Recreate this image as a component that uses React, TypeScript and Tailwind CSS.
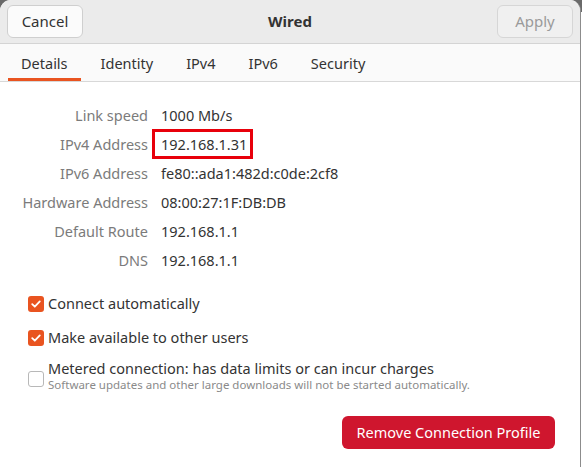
import React from "react"

const details: [string, string][] = [
  ["Link speed", "1000 Mb/s"],
  ["IPv4 Address", "192.168.1.31"],
  ["IPv6 Address", "fe80::ada1:482d:c0de:2cf8"],
  ["Hardware Address", "08:00:27:1F:DB:DB"],
  ["Default Route", "192.168.1.1"],
  ["DNS", "192.168.1.1"],
]

const tabs = ["Details", "Identity", "IPv4", "IPv6", "Security"]

function Check({ checked }: { checked: boolean }) {
  if (!checked) {
    return <span className="block w-[16px] h-[16px] rounded-[3px] border border-[#b8b8b8] bg-white" />
  }
  return (
    <span className="flex items-center justify-center w-[16px] h-[16px] rounded-[3px] bg-[#e95420]">
      <svg width="12" height="12" viewBox="0 0 12 12" fill="none">
        <path d="M2.2 6.2L4.8 8.7L9.8 3.4" stroke="white" strokeWidth="1.8" strokeLinecap="round" strokeLinejoin="round" />
      </svg>
    </span>
  )
}

export default function App() {
  return (
    <div className="relative w-[582px] h-[467px] bg-white overflow-hidden" style={{ fontFamily: '"Noto Sans", "DejaVu Sans", sans-serif' }}>
      {/* dark desktop peeking behind the rounded corners */}
      <div className="absolute left-0 top-0 w-[12px] h-[12px] bg-[#6a6a6a]" />
      <div className="absolute left-[568px] top-0 w-[14px] h-[12px] bg-[#6a6a6a]" />

      <div className="relative w-[581px] h-[467px] flex flex-col bg-white border-r border-[#8c8c8c] rounded-t-[11px] overflow-hidden">
        {/* Header bar */}
        <div className="h-[44px] shrink-0 flex items-center justify-between px-[7px] bg-[#ebebeb] border-b border-[#d4d4d4]">
          <button className="w-[76px] h-[33px] rounded-[6px] border border-[#cfcfcf] bg-[#fbfbfb] text-[15px] text-[#333]">
            Cancel
          </button>
          <span className="text-[15px] font-bold text-[#333]">Wired</span>
          <button className="w-[76px] h-[33px] rounded-[6px] border border-[#d6d6d6] bg-[#f0f0f0] text-[15px] text-[#9a9a9a]">
            Apply
          </button>
        </div>

        {/* Tabs */}
        <div className="h-[38px] shrink-0 flex items-stretch gap-[7px] pl-[8px] bg-[#fafafa] border-b border-[#d8d8d8]">
          {tabs.map((t, i) => (
            <div
              key={t}
              className={`flex items-center px-[13px] text-[14.5px] text-[#333] border-b-[3px] ${
                i === 0 ? "border-[#e95420]" : "border-transparent"
              }`}
            >
              <span className="pt-[5px]">{t}</span>
            </div>
          ))}
        </div>

        {/* Details grid */}
        <div className="grid grid-cols-[148px_1fr] gap-x-[13px] pt-[19px]">
          {details.map(([label, value]) => (
            <React.Fragment key={label}>
              <div className="h-[29px] flex items-center justify-end text-[14.5px] text-[#7b7b7b]">{label}</div>
              <div className="h-[29px] flex items-center text-[14.5px] text-[#333]">
                {label === "IPv4 Address" ? (
                  <span className="relative">
                    {value}
                    <span className="absolute left-[-9px] right-[-6px] top-[-5px] bottom-[-4px] border-[3px] border-[#e8000b]" />
                  </span>
                ) : (
                  value
                )}
              </div>
            </React.Fragment>
          ))}
        </div>

        {/* Checkboxes */}
        <div className="flex flex-col pl-[28px] pt-[21px] gap-[18px]">
          <label className="flex items-center gap-[4px] h-[16px]">
            <Check checked />
            <span className="text-[14.5px] text-[#333]">Connect automatically</span>
          </label>
          <label className="flex items-center gap-[4px] h-[16px]">
            <Check checked />
            <span className="text-[14.5px] text-[#333]">Make available to other users</span>
          </label>
          <label className="flex items-start gap-[4px] mt-[-4px]">
            <span className="pt-[11px]">
              <Check checked={false} />
            </span>
            <span className="flex flex-col">
              <span className="text-[14.5px] leading-[17px] text-[#333]">
                Metered connection: has data limits or can incur charges
              </span>
              <span className="text-[11.5px] leading-[15px] text-[#8a8a8a]">
                Software updates and other large downloads will not be started automatically.
              </span>
            </span>
          </label>
        </div>

        <div className="flex justify-end pr-[25px] pt-[24px]">
          <button className="w-[213px] h-[33px] rounded-[6px] bg-[#cf162e] text-white text-[14.5px]">
            Remove Connection Profile
          </button>
        </div>
      </div>
    </div>
  )
}
